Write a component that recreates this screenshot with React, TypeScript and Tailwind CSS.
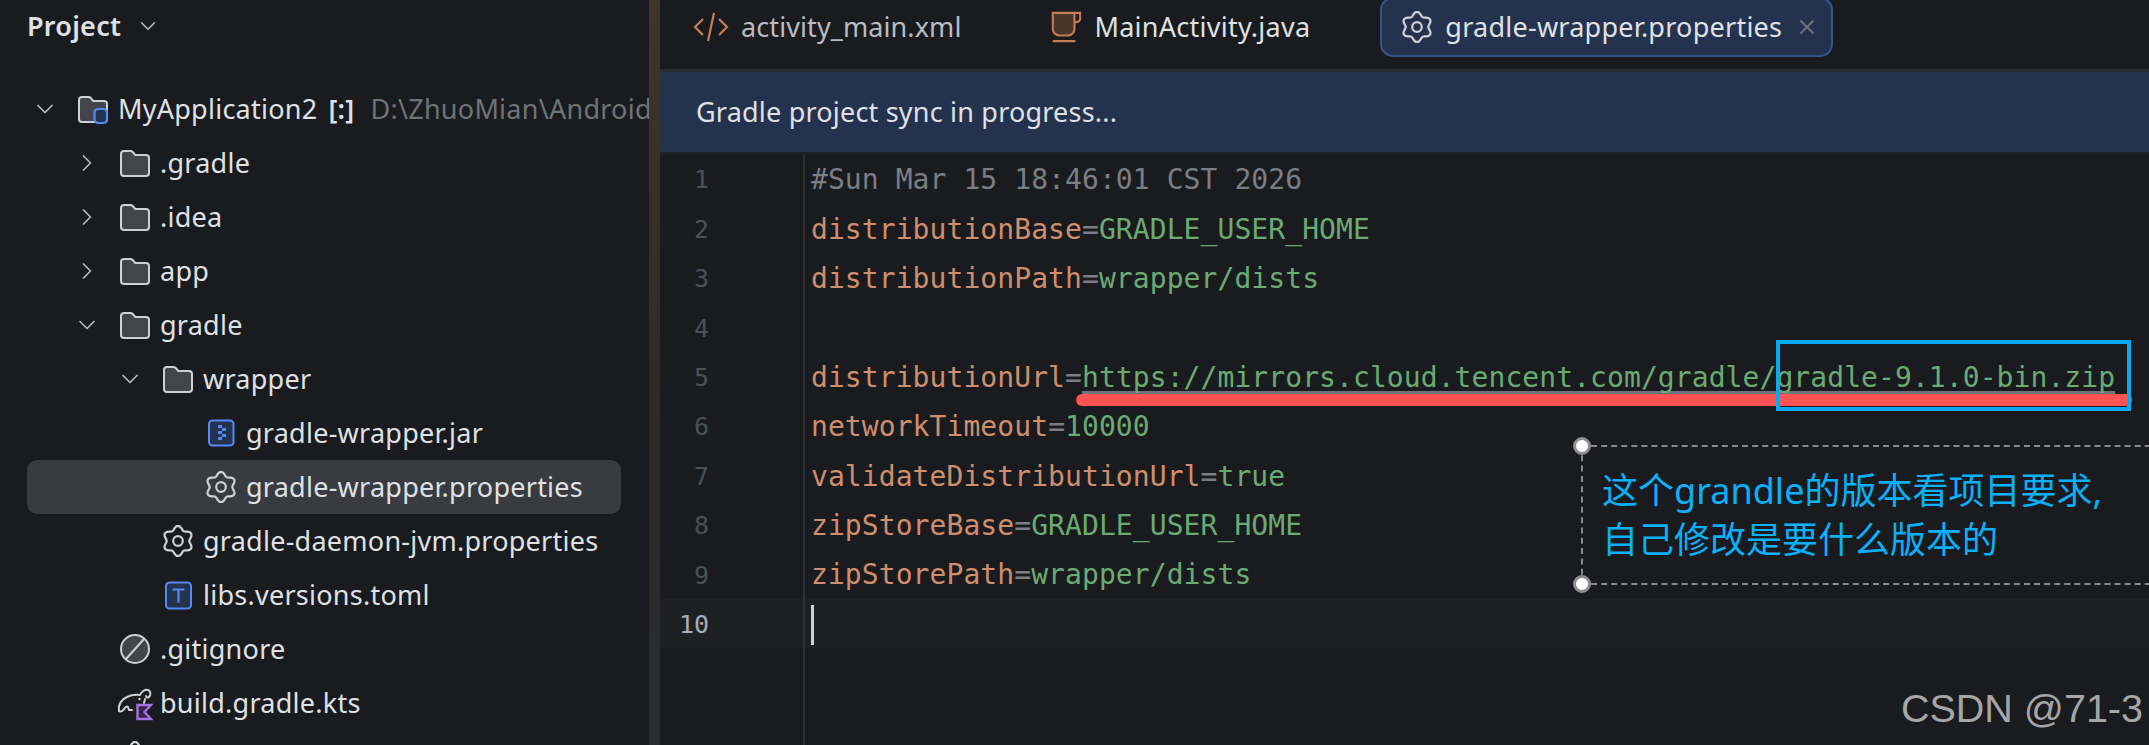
import { ChevronDown, ChevronRight, X } from "lucide-react";

type TreeRow = {
  name: string;
  indent: string;
  arrow?: "open" | "closed";
  icon: "root" | "folder" | "jar" | "gear" | "toml" | "ignore" | "gradle";
  badge?: string;
  hint?: string;
  selected?: boolean;
};

const treeRows: TreeRow[] = [
  { name: "MyApplication2", badge: "[:]", indent: "pl-0", arrow: "open", icon: "root", hint: "D:\\ZhuoMian\\Android" },
  { name: ".gradle", indent: "pl-[42px]", arrow: "closed", icon: "folder" },
  { name: ".idea", indent: "pl-[42px]", arrow: "closed", icon: "folder" },
  { name: "app", indent: "pl-[42px]", arrow: "closed", icon: "folder" },
  { name: "gradle", indent: "pl-[42px]", arrow: "open", icon: "folder" },
  { name: "wrapper", indent: "pl-[85px]", arrow: "open", icon: "folder" },
  { name: "gradle-wrapper.jar", indent: "pl-[128px]", icon: "jar" },
  { name: "gradle-wrapper.properties", indent: "pl-[128px]", icon: "gear", selected: true },
  { name: "gradle-daemon-jvm.properties", indent: "pl-[85px]", icon: "gear" },
  { name: "libs.versions.toml", indent: "pl-[85px]", icon: "toml" },
  { name: ".gitignore", indent: "pl-[42px]", icon: "ignore" },
  { name: "build.gradle.kts", indent: "pl-[42px]", icon: "gradle" },
  // only the top of this row's icon is on screen
  { name: "", indent: "pl-[42px]", icon: "gear" },
];

type CodeLine = { key?: string; value?: string; comment?: string; url?: boolean };

const codeLines: CodeLine[] = [
  { comment: "#Sun Mar 15 18:46:01 CST 2026" },
  { key: "distributionBase", value: "GRADLE_USER_HOME" },
  { key: "distributionPath", value: "wrapper/dists" },
  {},
  { key: "distributionUrl", value: "https://mirrors.cloud.tencent.com/gradle/gradle-9.1.0-bin.zip", url: true },
  { key: "networkTimeout", value: "10000" },
  { key: "validateDistributionUrl", value: "true" },
  { key: "zipStoreBase", value: "GRADLE_USER_HOME" },
  { key: "zipStorePath", value: "wrapper/dists" },
  {},
];

// six soft lobes, same shape as the IDE's settings cog
const cogPath = (() => {
  const points: string[] = [];
  for (let i = 0; i < 96; i++) {
    const a = (i / 96) * Math.PI * 2;
    const r = 13.2 + 1.9 * Math.cos(6 * a);
    const x = 16 + r * Math.sin(a);
    const y = 16 - r * Math.cos(a);
    points.push(`${x.toFixed(2)} ${y.toFixed(2)}`);
  }
  return `M${points.join("L")}Z`;
})();

const GearIcon = ({ className }: { className: string }) => (
  <svg viewBox="0 0 32 32" className={className} fill="none" stroke="#ced0d6" strokeWidth="2.2">
    <path d={cogPath} strokeLinejoin="round" />
    <circle cx="16" cy="16" r="4.8" />
  </svg>
);

const FolderIcon = ({ badge }: { badge?: boolean }) => (
  <svg viewBox="0 0 32 32" className="w-8 h-8 shrink-0">
    <path
      d="M2 7a3 3 0 0 1 3-3h6.5a3 3 0 0 1 2.2 1l2.6 3h10.7a3 3 0 0 1 3 3v15a3 3 0 0 1-3 3H5a3 3 0 0 1-3-3z"
      fill="#43454a"
      stroke="#ced0d6"
      strokeWidth="2"
    />
    {badge && (
      <rect x="17.5" y="16" width="12.5" height="14" rx="3.5" fill="#25324d" stroke="#548af7" strokeWidth="2.2" />
    )}
  </svg>
);

const FileIcon = ({ icon }: { icon: TreeRow["icon"] }) => {
  if (icon === "root") return <FolderIcon badge />;
  if (icon === "folder") return <FolderIcon />;
  if (icon === "gear") return <GearIcon className="w-8 h-8 shrink-0" />;
  if (icon === "jar") {
    return (
      <svg viewBox="0 0 32 32" className="w-8 h-8 shrink-0">
        <rect x="4" y="3.5" width="24.5" height="25" rx="3.5" fill="#25324d" stroke="#548af7" strokeWidth="2" />
        <path d="M13 8h4v3h-4zM17 11h4v3h-4zM13 14h4v3h-4zM17 17h4v3h-4zM13 20h4v3h-4z" fill="#548af7" />
      </svg>
    );
  }
  if (icon === "toml") {
    return (
      <svg viewBox="0 0 32 32" className="w-8 h-8 shrink-0">
        <rect x="4" y="3.5" width="25" height="26" rx="3.5" fill="#25324d" stroke="#548af7" strokeWidth="2" />
        <path d="M10.5 10.5h12M16.5 10.5v13" stroke="#548af7" strokeWidth="2.2" fill="none" />
      </svg>
    );
  }
  if (icon === "ignore") {
    return (
      <svg viewBox="0 0 32 32" className="w-8 h-8 shrink-0">
        <circle cx="16" cy="16" r="14" fill="#43454a" stroke="#ced0d6" strokeWidth="2" />
        <path d="M7 26 25 6" stroke="#ced0d6" strokeWidth="2" />
      </svg>
    );
  }
  return (
    <svg viewBox="0 0 36 36" className="w-9 h-9 shrink-0 -ml-0.5 -mr-0.5">
      <path
        d="M2 26c-1-7 3-12 8-14 4-2 8-3 13-2 1-3 5-6 8-5 3 1 3 5 1 7-2 1-3 0-3-1M28 14l-1 4M2 26c2 1 4 0 5-2 1-2 3-3 4-2l1 3h3"
        fill="none"
        stroke="#ced0d6"
        strokeWidth="2"
        strokeLinecap="round"
        strokeLinejoin="round"
      />
      <circle cx="22.5" cy="14" r="1.2" fill="#ced0d6" />
      <path d="M20.5 20h13.5l-6.5 7 6.5 7H20.5z" fill="#2f2542" stroke="#a571e6" strokeWidth="2.4" strokeLinejoin="miter" />
    </svg>
  );
};

const ProjectTree = () => (
  <aside className="w-[649px] shrink-0 h-full overflow-hidden flex flex-col font-['Noto_Sans',sans-serif] text-[27px] tracking-[0.25px]">
    <div className="h-[82px] shrink-0 pl-[27px] pt-[7px] flex items-start">
      <div className="h-[38px] flex items-center">
        <span className="font-semibold text-[#dfe1e5]">Project</span>
        <ChevronDown className="w-[26px] h-[26px] ml-[14px] text-[#b4b8bf]" strokeWidth={1.5} />
      </div>
    </div>
    <div className="flex flex-col pl-[27px] pr-[28px]">
      {treeRows.map((row) => (
        <div
          key={row.name}
          className={`h-[54px] shrink-0 flex items-center whitespace-nowrap rounded-[10px] ${row.indent} ${
            row.selected ? "bg-[#393b40]" : ""
          }`}
        >
          <span className="w-9 shrink-0 flex justify-center text-[#b4b8bf]">
            {row.arrow === "open" && <ChevronDown className="w-7 h-7" strokeWidth={1.5} />}
            {row.arrow === "closed" && <ChevronRight className="w-7 h-7" strokeWidth={1.5} />}
          </span>
          <span className="ml-[14px] mr-[9px] flex">
            <FileIcon icon={row.icon} />
          </span>
          <span className="text-[#dfe1e5]">{row.name}</span>
          {row.badge && <span className="ml-[11px] font-semibold text-[#dfe1e5]">{row.badge}</span>}
          {row.hint && <span className="ml-[16px] text-[#6f737a]">{row.hint}</span>}
        </div>
      ))}
    </div>
  </aside>
);

const TabBar = () => (
  <div className="h-[69px] shrink-0 flex items-start overflow-hidden font-['Noto_Sans',sans-serif] text-[27px] tracking-[0.25px]">
    <div className="ml-[33px] h-[54px] flex items-center">
      <svg viewBox="0 0 36 36" className="w-9 h-9 shrink-0" fill="none" stroke="#c77d55" strokeWidth="2.2">
        <path d="M10 10 2 18l8 8M26 10l8 8-8 8M21 4l-6 28" />
      </svg>
      <span className="ml-[12px] tracking-[0.1px] text-[#b9bcc3]">activity_main.xml</span>
    </div>
    <div className="ml-[89px] h-[54px] flex items-center">
      <svg viewBox="0 0 34 36" className="w-[32px] h-9 shrink-0" fill="none" stroke="#c77d55" strokeWidth="2.2">
        <path d="M3 3h23v17a7 7 0 0 1-7 7h-9a7 7 0 0 1-7-7z" fill="#4a352b" />
        <path d="M26 3h6v6c0 3-3 4-6 4M3 33h24" />
      </svg>
      <span className="ml-[12px] text-[#dfe1e5]">MainActivity.java</span>
    </div>
    <div className="ml-[70px] h-[60px] -mt-[3px] w-[453px] flex items-center rounded-[13px] border-2 border-[#34538f] bg-[#25324d] pl-[19px]">
      <GearIcon className="w-[32px] h-[32px] shrink-0" />
      <span className="ml-[12px] text-[#dfe1e5]">gradle-wrapper.properties</span>
      <X className="w-6 h-6 ml-[13px] text-[#6f737a]" strokeWidth={1.8} />
    </div>
  </div>
);

const CodeEditor = () => (
  <div className="flex-1 flex flex-col min-h-0 font-['DejaVu_Sans_Mono',monospace]">
    {codeLines.map((line, i) => {
      const current = i === codeLines.length - 1;
      return (
        <div key={i} className={`h-[49.4px] shrink-0 flex items-center ${current ? "bg-[#1f2024]" : ""}`}>
          <div
            className={`w-[145px] h-full shrink-0 border-r-2 border-[#2e3034] flex items-center justify-end pt-[3px] pr-[94px] text-[25px] ${
              current ? "text-[#a8adbd]" : "text-[#4b5059]"
            }`}
          >
            {i + 1}
          </div>
          <div className="pl-[6px] pt-[3px] whitespace-nowrap text-[28px] tracking-[0.08px]">
            {line.comment && <span className="text-[#7a7e85]">{line.comment}</span>}
            {line.key && (
              <>
                <span className="text-[#cf8e6d]">{line.key}</span>
                <span className="text-[#7a7e85]">=</span>
                <span
                  className={`text-[#6aab73] ${
                    line.url
                      ? "underline decoration-[#6f737a] decoration-[3px] underline-offset-[4px] [text-decoration-skip-ink:none]"
                      : ""
                  }`}
                >
                  {line.value}
                </span>
              </>
            )}
            {current && <span className="block w-[3px] h-[40px] bg-[#ced0d6]" />}
          </div>
        </div>
      );
    })}
    <div className="flex-1 flex">
      <div className="w-[145px] shrink-0 border-r-2 border-[#2e3034]" />
    </div>
  </div>
);

const Handle = ({ className }: { className: string }) => (
  <span className={`absolute w-[18px] h-[18px] rounded-full bg-white border-[3px] border-[#8f8f8f] ${className}`} />
);

export default function App() {
  return (
    <div className="relative w-[2149px] h-[745px] overflow-hidden flex bg-[#1a1b1e]">
      <ProjectTree />
      <div className="w-[11px] shrink-0 h-full bg-gradient-to-b from-[#3f3529] via-[#2e2b27] to-[#2a2c30]" />

      <main className="flex-1 min-w-0 flex flex-col">
        <TabBar />
        <div className="h-[3px] shrink-0 bg-[#2a2b2e]" />
        <div className="h-[80px] shrink-0 bg-[#25324d] flex items-center pl-[36px] font-['Noto_Sans',sans-serif] text-[27px] tracking-[0.2px] text-[#dfe1e5]">
          Gradle project sync in progress...
        </div>
        <div className="h-[2px] shrink-0 bg-[#1e1f22]" />
        <CodeEditor />
      </main>

      {/* screenshot annotations drawn on top */}
      <div className="absolute left-[1076px] top-[394px] w-[1056px] h-[12px] rounded-full bg-[#ff5252]" />
      <div className="absolute left-[1776px] top-[340px] w-[355px] h-[71px] border-[4px] border-[#09a8f5]" />
      <div className="absolute left-[1581px] top-[445px] w-[600px] h-[140px] border-2 border-r-0 border-dashed border-[#8a8a8a]">
        <Handle className="-left-[10px] -top-[10px]" />
        <Handle className="-left-[10px] -bottom-[10px]" />
        <p className="absolute left-[19px] top-[19px] whitespace-nowrap text-[36px] leading-[49px] text-[#0bb0f8] font-['Noto_Sans','Noto_Sans_CJK_SC',sans-serif]">
          这个grandle的版本看项目要求,
          <br />
          自己修改是要什么版本的
        </p>
      </div>
      <span className="absolute right-[6px] top-[685px] text-[39.5px] leading-[46px] text-[#a6a6a6] font-['Liberation_Sans',sans-serif] whitespace-nowrap">
        CSDN @71-3
      </span>
    </div>
  );
}
